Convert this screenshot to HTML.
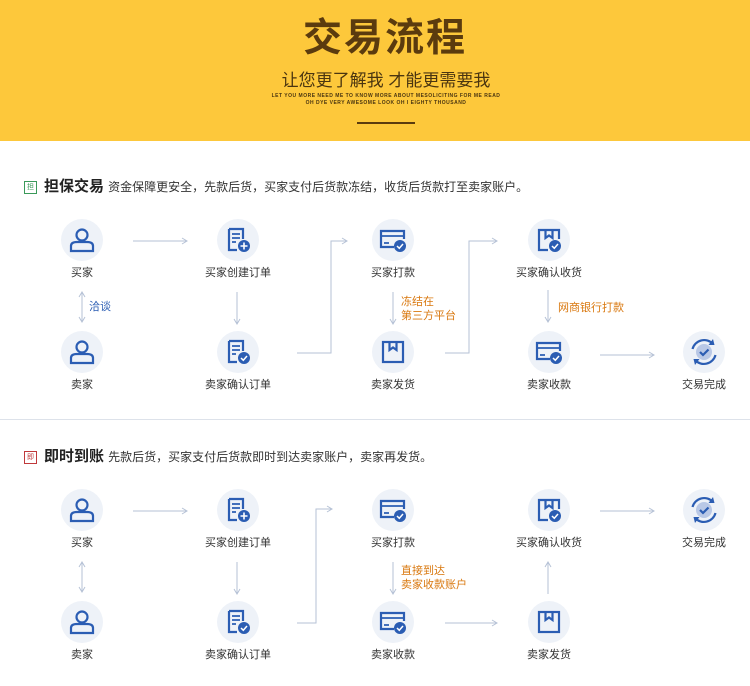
<!DOCTYPE html>
<html><head><meta charset="utf-8"><style>
*{margin:0;padding:0}
body{width:750px;height:686px;background:#fff;position:relative;overflow:hidden;font-family:"Liberation Sans","Noto Sans CJK SC",sans-serif}
.hd{position:absolute;left:0;top:0;width:750px;height:141px;background:#fdc83b}
.t{position:absolute;white-space:nowrap;line-height:1}
.c{text-align:center;width:120px;font-size:11px;color:#333}
.o{font-size:11px;color:#d9780f;line-height:14px}
</style></head><body>
<div class="hd"></div>
<div class="t" style="left:0;width:770px;text-align:center;top:19px;font-size:39px;font-weight:bold;color:#5b3b0e;letter-spacing:2px">交易流程</div>
<div class="t" style="left:0;width:772px;text-align:center;top:72px;font-size:17px;color:#4a3510">让您更了解我 才能更需要我</div>
<div class="t" style="left:0;width:772px;text-align:center;top:94px;font-size:5px;color:#4a3510;font-weight:bold;letter-spacing:.5px">LET YOU MORE NEED ME TO KNOW MORE ABOUT MESOLICITING FOR ME READ</div>
<div class="t" style="left:0;width:772px;text-align:center;top:101px;font-size:5px;color:#4a3510;font-weight:bold;letter-spacing:.5px">OH DYE VERY AWESOME LOOK OH I EIGHTY THOUSAND</div>
<div class="t" style="left:357px;top:122px;width:58px;height:2px;background:#5b3b0e"></div>

<div class="t" style="left:24px;top:181px;width:11px;height:11px;border:1px solid #3a9a5a;font-size:7px;color:#3a9a5a;text-align:center;line-height:11px">担</div>
<div class="t" style="left:44px;top:179px;font-size:15px;font-weight:bold;color:#222">担保交易 <span style="font-size:12px;font-weight:normal;color:#333">资金保障更安全，先款后货，买家支付后货款冻结，收货后货款打至卖家账户。</span></div>
<div class="t" style="left:0;top:419px;width:750px;height:1px;background:#dde2ea"></div>
<div class="t" style="left:24px;top:451px;width:11px;height:11px;border:1px solid #c0393b;font-size:7px;color:#c0393b;text-align:center;line-height:11px">即</div>
<div class="t" style="left:44px;top:449px;font-size:15px;font-weight:bold;color:#222">即时到账 <span style="font-size:12px;font-weight:normal;color:#333">先款后货，买家支付后货款即时到达卖家账户，卖家再发货。</span></div>

<svg class="t" style="left:0;top:0" width="750" height="686">
<defs>
<marker id="a" markerWidth="8" markerHeight="8" refX="6" refY="4" orient="auto"><path d="M1 1L6 4L1 7" fill="none" stroke="#b6c2d6" stroke-width="1"/></marker>
<marker id="b" markerWidth="8" markerHeight="8" refX="2" refY="4" orient="auto"><path d="M7 1L2 4L7 7" fill="none" stroke="#b6c2d6" stroke-width="1"/></marker>
<g id="person" fill="none" stroke="#2b5db3" stroke-width="2.2"><circle cx="0" cy="-5" r="5.5"/><path d="M-11 11 L-11 6 Q-11 2 -5 2 L5 2 Q11 2 11 6 L11 11 Z"/></g>
<g id="docplus"><path d="M-9 -11 H5 V-1 M-1 10 H-9 V-11" fill="none" stroke="#2b5db3" stroke-width="2.2"/><path d="M-6 -6H2M-6 -2H2M-6 2H-2" stroke="#2b5db3" stroke-width="1.8"/><circle cx="6" cy="6" r="6" fill="#2b5db3"/><path d="M6 2.5V9.5M2.5 6H9.5" stroke="#fff" stroke-width="1.6"/></g>
<g id="doccheck"><path d="M-9 -11 H5 V-1 M-1 10 H-9 V-11" fill="none" stroke="#2b5db3" stroke-width="2.2"/><path d="M-6 -6H2M-6 -2H2M-6 2H-2" stroke="#2b5db3" stroke-width="1.8"/><circle cx="6" cy="6" r="6" fill="#2b5db3"/><path d="M3 6L5.3 8.3L9 4" fill="none" stroke="#fff" stroke-width="1.5"/></g>
<g id="card"><path d="M1 7H-12V-9H11V-1" fill="none" stroke="#2b5db3" stroke-width="2.2"/><path d="M-12 -4H11M-9 3H-4" stroke="#2b5db3" stroke-width="1.8"/><circle cx="7" cy="6" r="6" fill="#2b5db3"/><path d="M4 6L6.3 8.3L10 4" fill="none" stroke="#fff" stroke-width="1.5"/></g>
<g id="box" fill="none" stroke="#2b5db3" stroke-width="2.2"><rect x="-10" y="-10" width="20" height="20"/><path d="M-3.5 -10V-2L0 -4.5L3.5 -2V-10"/></g>
<g id="boxcheck"><path d="M-1 10H-10V-10H10V-1" fill="none" stroke="#2b5db3" stroke-width="2.2"/><path d="M-3.5 -10V-2L0 -4.5L3.5 -2V-10" fill="none" stroke="#2b5db3" stroke-width="2.2"/><circle cx="6" cy="6" r="6" fill="#2b5db3"/><path d="M3 6L5.3 8.3L9 4" fill="none" stroke="#fff" stroke-width="1.5"/></g>
<g id="done"><circle r="8" fill="#b9c8e6"/><path d="M-4 0L-1 3L4.5 -2.5" fill="none" stroke="#2b5db3" stroke-width="2.2"/><path d="M-11.5 -3A12 12 0 0 1 9 -8M11.5 3A12 12 0 0 1 -9 8" fill="none" stroke="#2b5db3" stroke-width="2.2"/><path d="M9 -13L10.5 -7L4.5 -7Z M-9 13L-10.5 7L-4.5 7Z" fill="#2b5db3"/></g>
</defs>
<g fill="#eef2f8">
<circle cx="82" cy="240" r="21"/><circle cx="238" cy="240" r="21"/><circle cx="393" cy="240" r="21"/><circle cx="549" cy="240" r="21"/>
<circle cx="82" cy="352" r="21"/><circle cx="238" cy="352" r="21"/><circle cx="393" cy="352" r="21"/><circle cx="549" cy="352" r="21"/><circle cx="704" cy="352" r="21"/>
<circle cx="82" cy="510" r="21"/><circle cx="238" cy="510" r="21"/><circle cx="393" cy="510" r="21"/><circle cx="549" cy="510" r="21"/><circle cx="704" cy="510" r="21"/>
<circle cx="82" cy="622" r="21"/><circle cx="238" cy="622" r="21"/><circle cx="393" cy="622" r="21"/><circle cx="549" cy="622" r="21"/>
</g>
<use href="#person" x="82" y="240"/><use href="#docplus" x="238" y="240"/><use href="#card" x="393" y="240"/><use href="#boxcheck" x="549" y="240"/>
<use href="#person" x="82" y="352"/><use href="#doccheck" x="238" y="352"/><use href="#box" x="393" y="352"/><use href="#card" x="549" y="352"/><use href="#done" x="704" y="352"/>
<use href="#person" x="82" y="510"/><use href="#docplus" x="238" y="510"/><use href="#card" x="393" y="510"/><use href="#boxcheck" x="549" y="510"/><use href="#done" x="704" y="510"/>
<use href="#person" x="82" y="622"/><use href="#doccheck" x="238" y="622"/><use href="#card" x="393" y="622"/><use href="#box" x="549" y="622"/>
<g fill="none" stroke="#b6c2d6" stroke-width="1">
<path d="M133 241H187" marker-end="url(#a)"/>
<path d="M82 292V322" marker-start="url(#b)" marker-end="url(#a)"/>
<path d="M237 292V324" marker-end="url(#a)"/>
<path d="M297 353H331V241H347" marker-end="url(#a)"/>
<path d="M393 292V324" marker-end="url(#a)"/>
<path d="M445 353H469V241H497" marker-end="url(#a)"/>
<path d="M548 290V322" marker-end="url(#a)"/>
<path d="M600 355H654" marker-end="url(#a)"/>
<path d="M133 511H187" marker-end="url(#a)"/>
<path d="M82 562V592" marker-start="url(#b)" marker-end="url(#a)"/>
<path d="M237 562V594" marker-end="url(#a)"/>
<path d="M297 623H316V509H332" marker-end="url(#a)"/>
<path d="M393 562V594" marker-end="url(#a)"/>
<path d="M445 623H497" marker-end="url(#a)"/>
<path d="M548 594V562" marker-end="url(#a)"/>
<path d="M600 511H654" marker-end="url(#a)"/>
</g>
</svg>

<div class="t c" style="left:22px;top:268px">买家</div>
<div class="t c" style="left:178px;top:268px">买家创建订单</div>
<div class="t c" style="left:333px;top:268px">买家打款</div>
<div class="t c" style="left:489px;top:268px">买家确认收货</div>
<div class="t c" style="left:22px;top:380px">卖家</div>
<div class="t c" style="left:178px;top:380px">卖家确认订单</div>
<div class="t c" style="left:333px;top:380px">卖家发货</div>
<div class="t c" style="left:489px;top:380px">卖家收款</div>
<div class="t c" style="left:644px;top:380px">交易完成</div>
<div class="t" style="left:89px;top:302px;font-size:11px;color:#2b5db3">洽谈</div>
<div class="t o" style="left:401px;top:295px">冻结在<br>第三方平台</div>
<div class="t o" style="left:558px;top:301px">网商银行打款</div>

<div class="t c" style="left:22px;top:538px">买家</div>
<div class="t c" style="left:178px;top:538px">买家创建订单</div>
<div class="t c" style="left:333px;top:538px">买家打款</div>
<div class="t c" style="left:489px;top:538px">买家确认收货</div>
<div class="t c" style="left:644px;top:538px">交易完成</div>
<div class="t c" style="left:22px;top:650px">卖家</div>
<div class="t c" style="left:178px;top:650px">卖家确认订单</div>
<div class="t c" style="left:333px;top:650px">卖家收款</div>
<div class="t c" style="left:489px;top:650px">卖家发货</div>
<div class="t o" style="left:401px;top:564px">直接到达<br>卖家收款账户</div>
</body></html>
